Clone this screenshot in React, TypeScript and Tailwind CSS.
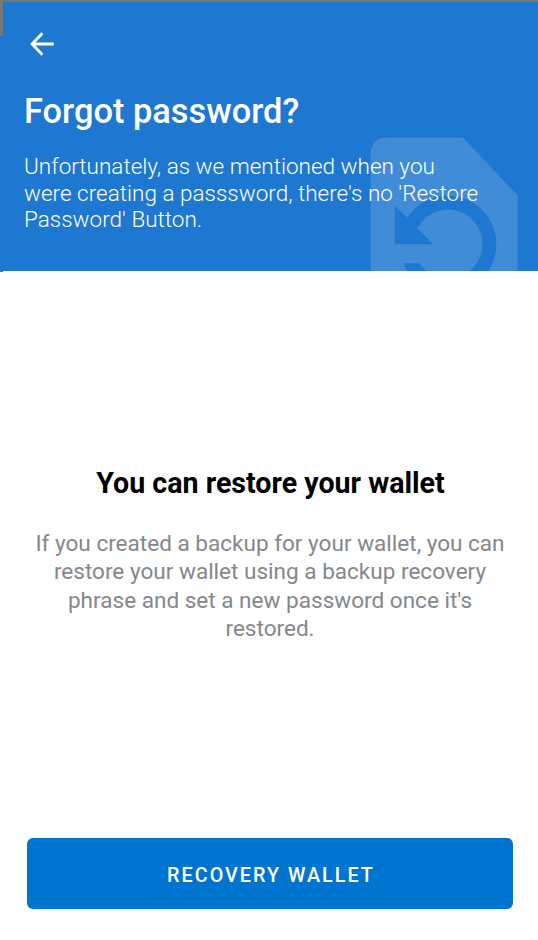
function BackArrow() {
  return (
    <svg className="block h-6 w-[26px]" viewBox="0 0 26 24" fill="none" stroke="white" strokeWidth="2.8">
      <path d="M24.8 12H4M13.4 1.2L3.1 12L13.4 22.8" />
    </svg>
  );
}

function RestoreWatermark() {
  return (
    <svg className="absolute right-5 bottom-0 h-[134px] w-[148px]" viewBox="370 137 148 134">
      <path
        fill="#418cd7"
        d="M370.6 271V155Q370.6 137.6 388 137.6H462.7L517.6 195.3V271Z"
      />
      <path
        fill="#1e77d0"
        d="M394.7 206L407.3 217.4A48.5 48.5 0 1 1 403.2 263.3H419.4A34.5 34.5 0 1 0 417.4 228.3L432.8 244.2H394.7Z"
      />
    </svg>
  );
}

export default function App() {
  return (
    <main className="flex h-[940px] w-[538px] flex-col overflow-hidden bg-white font-['Roboto',sans-serif]">
      <div className="h-0.5 shrink-0 bg-[#777773]" />
      <div className="flex h-[270px] shrink-0">
        <div className="w-[3px] bg-[#1e77d0]">
          <div className="h-[34px] bg-[#777773]" />
        </div>
        <header className="relative h-[269px] flex-1 bg-[#1e77d0] text-white">
          <RestoreWatermark />
          <div className="relative flex flex-col items-start pt-[30px] pl-[21px]">
            <button className="ml-[5px]" aria-label="Back">
              <BackArrow />
            </button>
            <h1 className="mt-[35px] text-[34.4px] leading-[40px] font-medium whitespace-nowrap">Forgot password?</h1>
            <p className="mt-[22px] text-[22.5px] leading-[26.7px] font-light whitespace-nowrap">
              Unfortunately, as we mentioned when you
              <br />
              were creating a passsword, there's no 'Restore
              <br />
              Password' Button.
            </p>
          </div>
        </header>
      </div>
      <section className="mt-[194px] flex flex-col items-center pl-0.5 text-center">
        <h2 className="pl-px text-[28.6px] leading-[34px] font-bold whitespace-nowrap text-black">You can restore your wallet</h2>
        <p className="mt-[30px] text-[22.55px] leading-[28.3px] whitespace-nowrap text-[#85878c]">
          If you created a backup for your wallet, you can
          <br />
          restore your wallet using a backup recovery
          <br />
          phrase and set a new password once it's
          <br />
          restored.
        </p>
      </section>
      <button className="mt-auto mr-[25px] mb-[31px] ml-[27px] h-[71px] shrink-0 rounded-md bg-[#0075d0] pt-1 pl-0.5 text-[19.8px] font-medium tracking-[2px] text-white">
        RECOVERY WALLET
      </button>
    </main>
  );
}
